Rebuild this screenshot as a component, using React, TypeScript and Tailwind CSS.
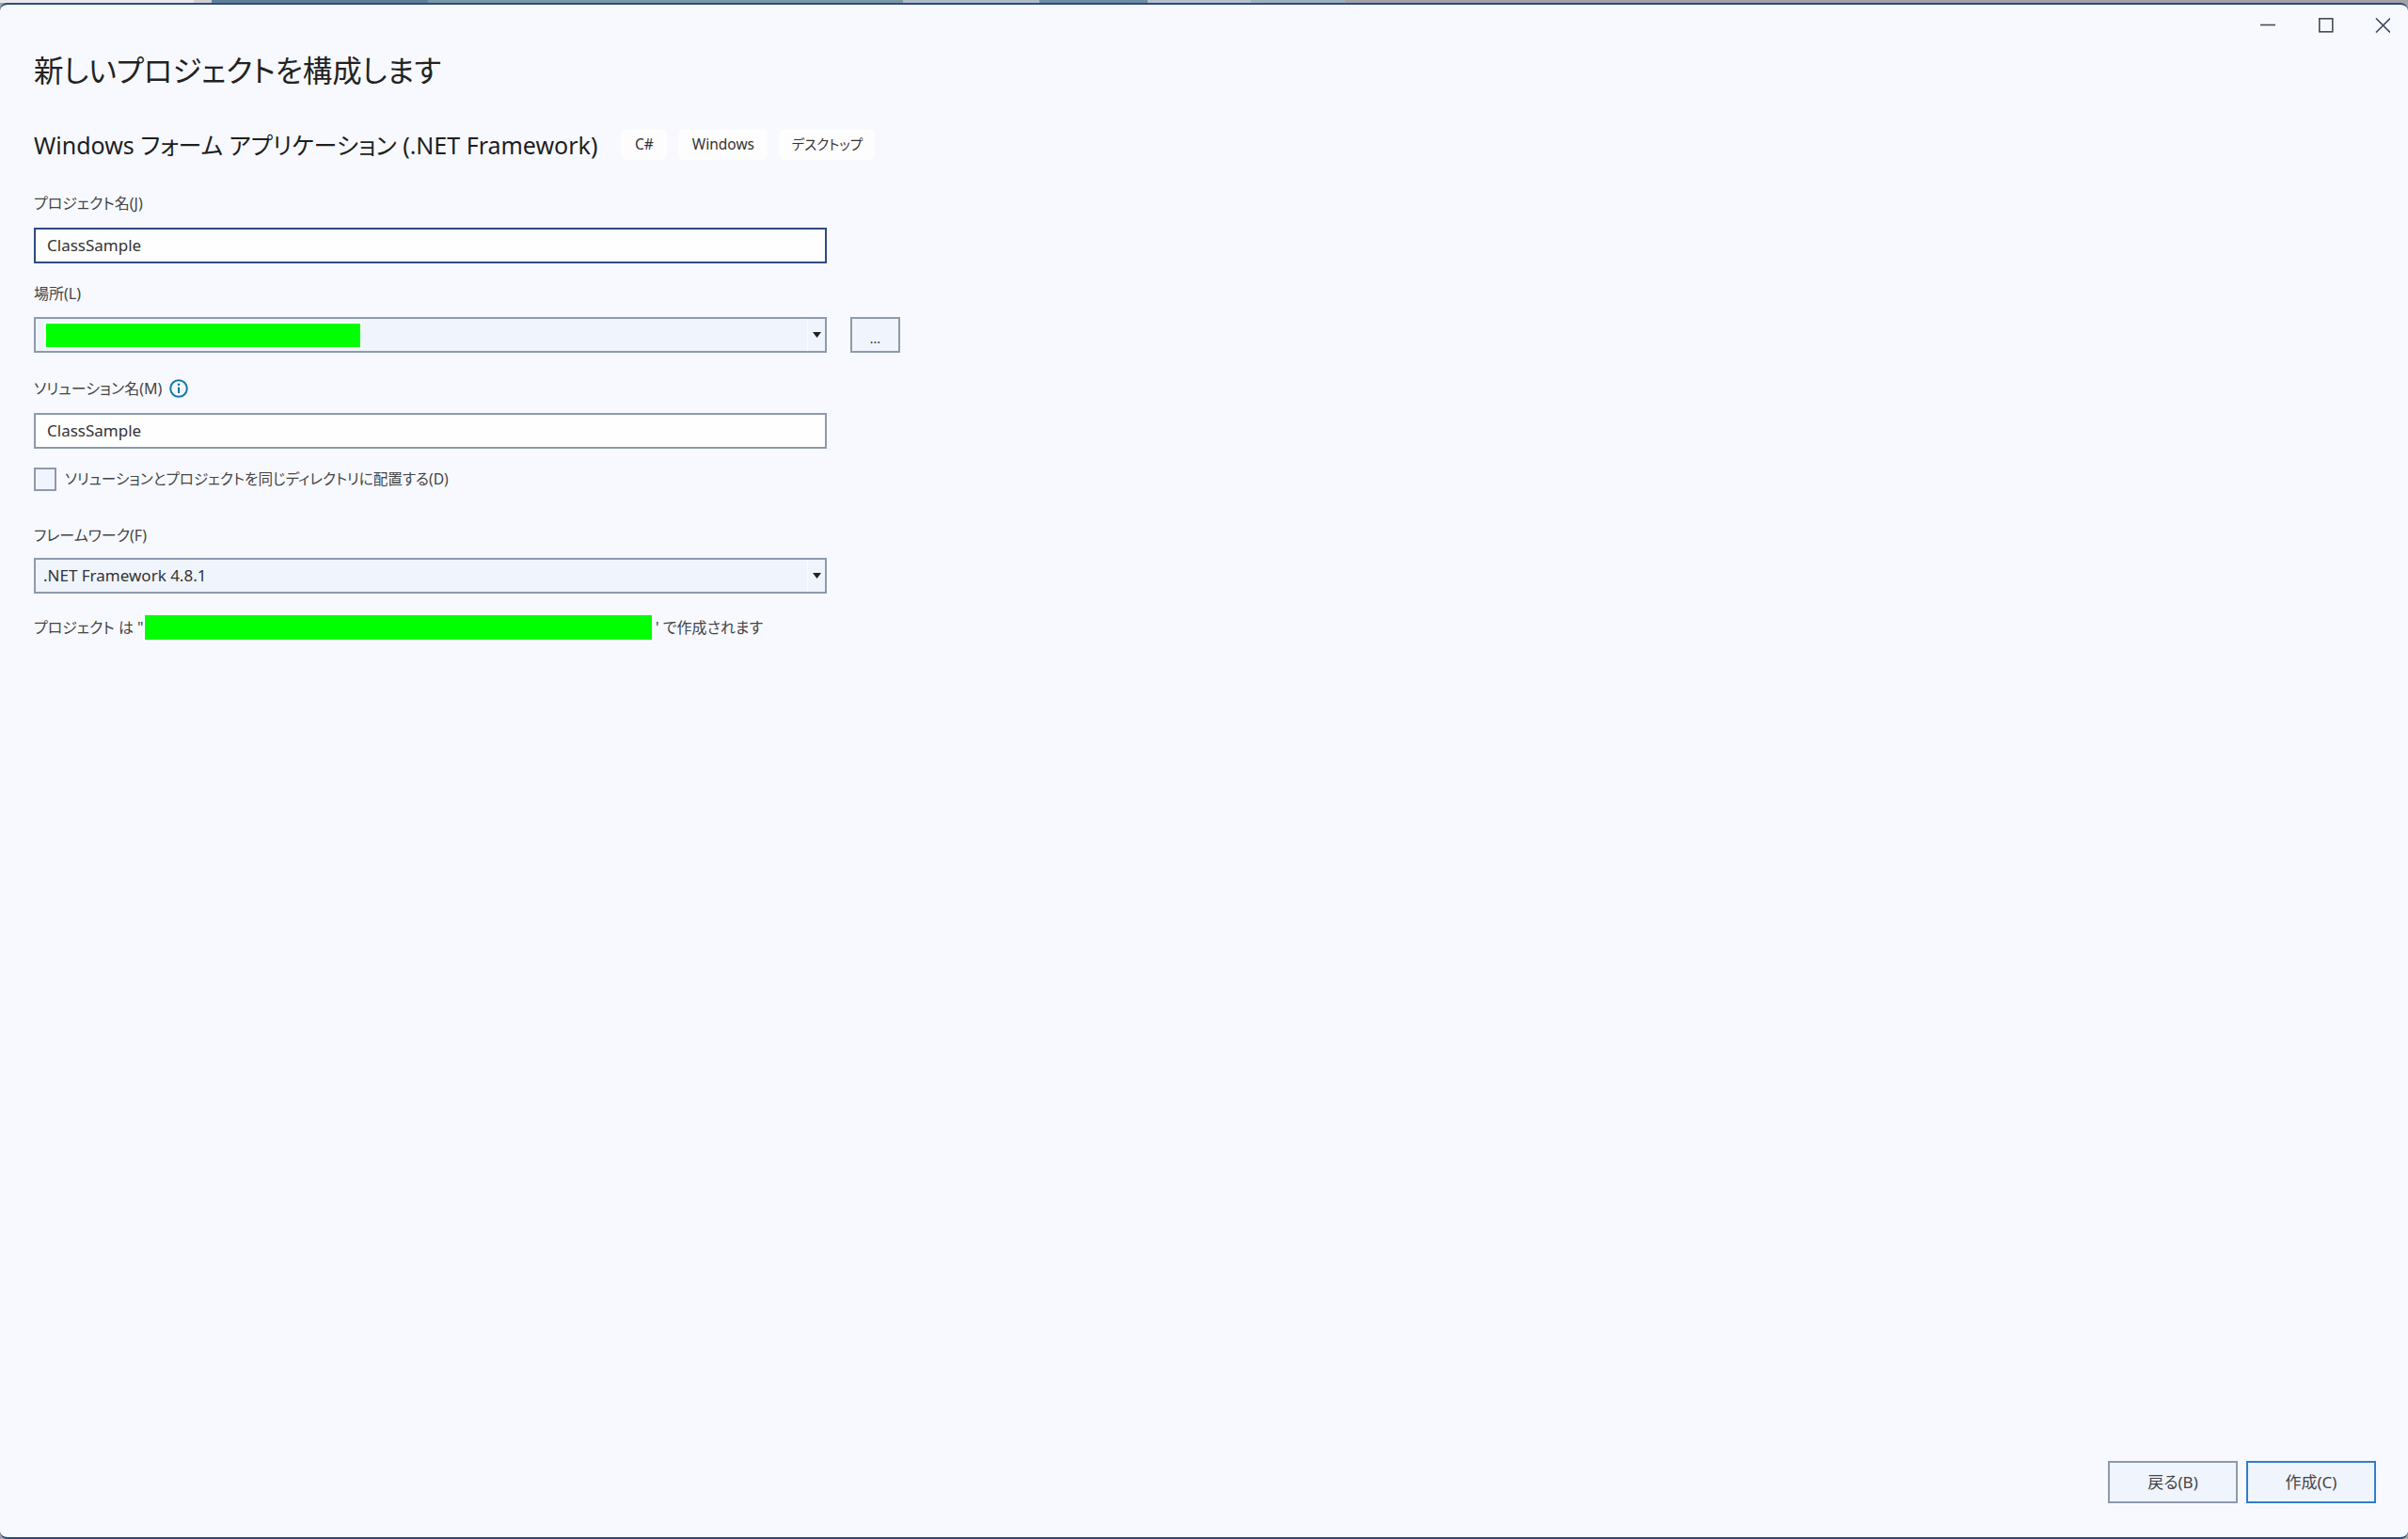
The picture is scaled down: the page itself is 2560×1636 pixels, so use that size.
const FONT = 'font-["Noto_Sans","Noto_Sans_CJK_JP",sans-serif] [font-feature-settings:"palt"]';

// background windows peeking out above the dialog
const stripSegments = [
  'w-[206px] bg-[#e8e8e8]',
  'w-[19px] bg-[#cfcfcf]',
  'w-[230px] bg-[#5f7f98]',
  'w-[505px] bg-[#7c98a6]',
  'w-[145px] bg-[#aebcc8]',
  'w-[115px] bg-[#6f8ea3]',
  'w-[110px] bg-[#b4c0ca]',
  'w-[100px] bg-[#9fb0bd]',
  'flex-1 bg-[#a3a3a3]',
];

function Label({ children }: { children: React.ReactNode }) {
  return <div className="text-[16px] leading-[24px] text-[#444444]">{children}</div>;
}

function TextBox({ value, focused }: { value: string; focused?: boolean }) {
  return (
    <div
      className={`flex h-[38px] w-[843px] items-center border-2 bg-[#fefefe] pl-[12px] text-[17px] text-[#333333] ${
        focused ? 'border-[#2f4a80]' : 'border-[#8e99ad]'
      }`}
    >
      {value}
    </div>
  );
}

function ComboBox({ children }: { children: React.ReactNode }) {
  return (
    <div className="flex h-[38px] w-[843px] items-stretch border-2 border-[#8e99ad] bg-[#f0f4fd]">
      <div className="flex flex-1 items-center">{children}</div>
      <div className="flex w-[19px] items-center justify-center border-l border-[#fbfcff]">
        <svg width="9" height="6" viewBox="0 0 9 6">
          <path d="M0 0h9L4.5 6z" fill="#222222" />
        </svg>
      </div>
    </div>
  );
}

function Tag({ children, className }: { children: React.ReactNode; className: string }) {
  return (
    <div className={`flex h-[33px] items-center justify-center rounded-[6px] bg-[#fdfdfe] text-[#333333] ${className}`}>
      {children}
    </div>
  );
}

function FooterButton({ children, primary }: { children: React.ReactNode; primary?: boolean }) {
  return (
    <button
      className={`flex h-[45px] w-[138px] items-center justify-center border-2 bg-[#f0f4fd] text-[17px] text-[#444444] ${
        primary ? 'border-[#2f7fca]' : 'border-[#8e99ad]'
      }`}
    >
      {children}
    </button>
  );
}

export default function App() {
  return (
    <div className={`flex h-[1636px] w-[2560px] flex-col overflow-hidden bg-[#a3a3a3] ${FONT}`}>
      <div className="flex h-[3px] shrink-0">
        {stripSegments.map((segment) => (
          <div key={segment} className={segment} />
        ))}
      </div>

      <div className="flex flex-1 flex-col rounded-[8px] border-t-2 border-b-2 border-[#2f4a80] bg-[#f7f9fe]">
        <div className="flex h-[31px] items-start justify-end pt-[14px] pr-[19px]">
          <svg width="138" height="16" viewBox="0 0 138 16" fill="none" stroke="#434b5c" strokeWidth="1.6">
            <path d="M0 7.5h16" />
            <rect x="62.8" y="0.8" width="14" height="14" />
            <path d="M123 .5l15 15M138 .5l-15 15" />
          </svg>
        </div>

        <div className="flex flex-1 flex-col pl-[36px] pr-[34px]">
          <h1 className="mt-[17px] text-[31.5px] leading-[44px] font-normal text-[#222222]">新しいプロジェクトを構成します</h1>

          <div className="mt-[40px] flex items-start">
            <div className="text-[25px] leading-[35px] text-[#1e1e1e]">Windows フォーム アプリケーション (.NET Framework)</div>
            <div className="ml-[25px] flex gap-[12px]">
              <Tag className="w-[49px] text-[15.5px]">C#</Tag>
              <Tag className="w-[95px] text-[15.5px]">Windows</Tag>
              <Tag className="w-[102px] text-[14.5px]">デスクトップ</Tag>
            </div>
          </div>

          <div className="mt-[32px]">
            <Label>プロジェクト名(J)</Label>
          </div>
          <div className="mt-[14px]">
            <TextBox value="ClassSample" focused />
          </div>

          <div className="mt-[20px]">
            <Label>場所(L)</Label>
          </div>
          <div className="mt-[13px] flex gap-[25px]">
            <ComboBox>
              <div className="ml-[11px] h-[25px] w-[334px] bg-[#00ff00] shadow-[0_0_0_2px_#ffffff]" />
            </ComboBox>
            <button className="flex h-[38px] w-[53px] items-center justify-center border-2 border-[#8e99ad] bg-[#f0f4fd] pt-[6px] text-[14px] text-[#333333]">
              ...
            </button>
          </div>

          <div className="mt-[26px] flex items-center gap-[8px]">
            <Label>ソリューション名(M)</Label>
            <svg width="20" height="20" viewBox="0 0 20 20" fill="none">
              <circle cx="10" cy="10" r="8.8" stroke="#1478a3" strokeWidth="2" />
              <circle cx="10" cy="5.8" r="1.3" fill="#1478a3" />
              <path d="M10 8.5v6.5" stroke="#1478a3" strokeWidth="2" />
            </svg>
          </div>
          <div className="mt-[14px]">
            <TextBox value="ClassSample" />
          </div>

          <div className="mt-[20px] flex items-center gap-[9px]">
            <div className="h-[25px] w-[24px] border-2 border-[#8e99ad] bg-[#f0f4fd]" />
            <div className="text-[15.6px] text-[#444444]">ソリューションとプロジェクトを同じディレクトリに配置する(D)</div>
          </div>

          <div className="mt-[35px]">
            <Label>フレームワーク(F)</Label>
          </div>
          <div className="mt-[12px]">
            <ComboBox>
              <span className="ml-[8px] text-[17px] text-[#333333]">.NET Framework 4.8.1</span>
            </ComboBox>
          </div>

          <div className="mt-[23px] flex h-[26px] items-center whitespace-nowrap text-[16px] text-[#444444]">
            <span className="w-[118px]">プロジェクト は "</span>
            <div className="h-[26px] w-[539px] bg-[#00ff00] shadow-[0_0_0_2px_#ffffff]" />
            <span className="ml-[4px]">' で作成されます</span>
          </div>

          <div className="mt-auto mb-[36px] flex justify-end gap-[9px]">
            <FooterButton>戻る(B)</FooterButton>
            <FooterButton primary>作成(C)</FooterButton>
          </div>
        </div>
      </div>
    </div>
  );
}
